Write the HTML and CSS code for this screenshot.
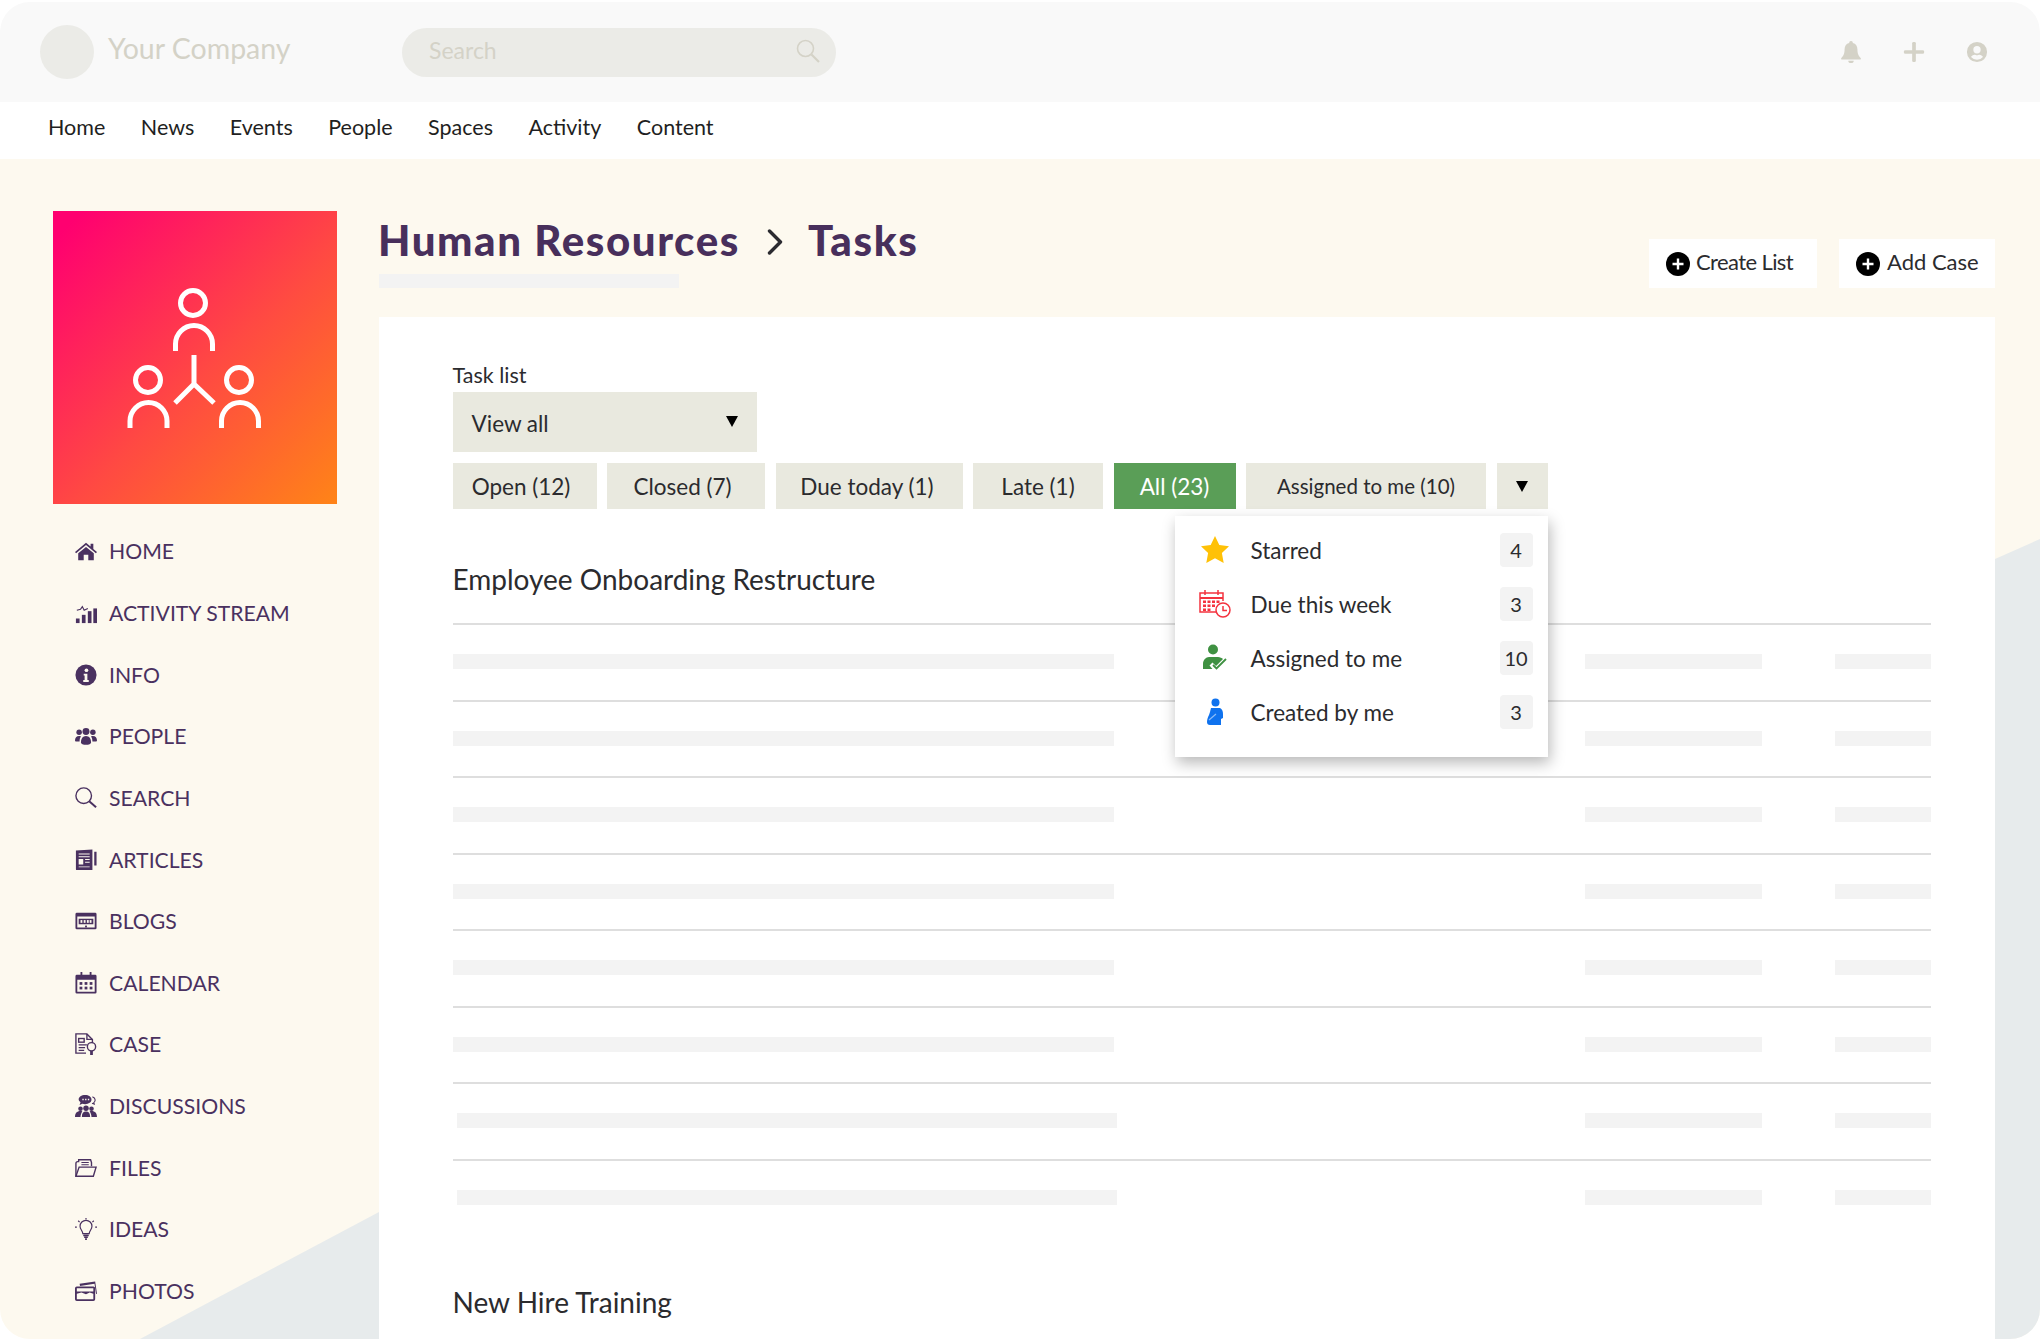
FILE: index.html
```html
<!DOCTYPE html>
<html lang="en">
  <head>
    <meta charset="UTF-8" />
    <meta name="viewport" content="width=device-width, initial-scale=1.0" />
    <title>Human Resources - Tasks</title>
    <link rel="stylesheet" href="styles.css">
  </head>
  <body>
    <div class="page">
      <div class="wedge wedge-left"></div>
      <div class="wedge wedge-right"></div>

      <header class="topbar">
        <div class="brand">
          <span class="brand-logo"></span>
          <span class="brand-name">Your Company</span>
        </div>
        <div class="searchbox">
          <span class="searchbox-text">Search</span>
          <svg class="searchbox-icon" viewBox="0 0 24 24" fill="none" stroke="currentColor" stroke-width="1.6"><circle cx="9.5" cy="9.5" r="8"/><path d="M15.5 15.5 23 23" stroke-width="2.2"/></svg>
        </div>
        <div class="topbar-icons">
          <svg viewBox="0 0 24 24" fill="currentColor"><path d="M12 0a2 2 0 0 0-2 2.200C6.600 3 5 5.800 5 9c0 5.500-1.700 7.500-3.500 9.500-.6.700-.2 1.800.8 1.800h19.400c1 0 1.400-1.100.8-1.800C20.700 16.500 19 14.500 19 9c0-3.200-1.600-6-5-6.800A2 2 0 0 0 12 0zM9 21.500a3 2.500 0 0 0 6 0z"/></svg>
          <svg viewBox="0 0 24 24" fill="currentColor"><rect x="10" y="1" width="4" height="22" rx="1.5"/><rect x="1" y="10" width="22" height="4" rx="1.5"/></svg>
          <svg viewBox="0 0 24 24" fill="currentColor"><path fill-rule="evenodd" d="M12 1a11 11 0 1 0 0 22 11 11 0 0 0 0-22zm0 4.500a4 4 0 1 1 0 8 4 4 0 0 1 0-8zm0 15a8.500 8.500 0 0 1-6.500-3c.8-1.500 2.200-2.500 3.800-2.500.8 0 1.500.5 2.700.5s1.900-.5 2.700-.5c1.600 0 3 1 3.800 2.500a8.500 8.500 0 0 1-6.500 3z"/></svg>
        </div>
      </header>

      <nav class="mainnav">
        <a>Home</a>
        <a>News</a>
        <a>Events</a>
        <a>People</a>
        <a>Spaces</a>
        <a>Activity</a>
        <a>Content</a>
      </nav>

      <div class="layout">
        <aside class="sidebar">
          <div class="space-tile">
            <svg viewBox="0 0 284 293" fill="none" stroke="#fff" stroke-width="5">
              <circle cx="140" cy="92" r="12.5"/>
              <path d="M122.500 140v-7a18.500 18.500 0 0 1 37 0v7"/>
              <path d="M141 144v29M141 173l-19 19M141 173l20 19"/>
              <circle cx="95" cy="169" r="12.5"/>
              <path d="M77 217v-7a18.500 18.500 0 0 1 37 0v7"/>
              <circle cx="186" cy="169" r="12.5"/>
              <path d="M168.500 217v-7a18.500 18.500 0 0 1 37 0v7"/>
            </svg>
          </div>
          <ul class="sidenav">
            <li>
              <svg viewBox="0 0 24 24" fill="currentColor"><path d="M12 3 0 13l1.200 1.400L12 5.500l10.800 8.900L24 13l-4-3.300V4h-3v3.200z"/><path d="M12 7.500 3.500 14.500V22h6v-6h5v6h6v-7.500z"/></svg>
              HOME
            </li>
            <li>
              <svg viewBox="0 0 24 24" fill="currentColor"><rect x="1" y="18" width="4" height="5"/><rect x="7.500" y="14" width="4" height="9"/><rect x="14" y="10" width="4" height="13"/><rect x="20" y="7" width="4" height="16"/><path d="M2 9l4-1 2-3 2 4 4-2" fill="none" stroke="currentColor" stroke-width="1.3"/></svg>
              ACTIVITY STREAM
            </li>
            <li>
              <svg viewBox="0 0 24 24"><circle cx="12" cy="12" r="11.5" fill="currentColor"/><circle cx="12.500" cy="6.800" r="2" fill="#fdf9ef"/><path d="M9.500 10.500h4v7h1.500v2H9v-2h1.500v-5h-1z" fill="#fdf9ef"/></svg>
              INFO
            </li>
            <li>
              <svg viewBox="0 0 24 24" fill="currentColor"><circle cx="4.500" cy="8" r="3"/><circle cx="19.500" cy="8" r="3"/><circle cx="12" cy="7" r="3.8"/><path d="M0 17c0-3 1.500-5 4.500-5 .8 0 1.500.2 2 .5-1 1.200-1.500 3-1.500 5.500H1c-.6 0-1-.4-1-1zM24 17c0-3-1.500-5-4.500-5-.8 0-1.500.2-2 .5 1 1.200 1.500 3 1.500 5.500h4c.6 0 1-.4 1-1z"/><path d="M6.500 19c0-4 2-7 5.500-7s5.500 3 5.500 7c0 1.500-2.500 2.500-5.500 2.500S6.500 20.500 6.500 19z"/></svg>
              PEOPLE
            </li>
            <li>
              <svg viewBox="0 0 24 24" fill="none" stroke="currentColor" stroke-width="1.5"><circle cx="9.500" cy="9.500" r="8.500"/><path d="M15.500 15.500 23 22" stroke-width="2.2"/></svg>
              SEARCH
            </li>
            <li>
              <svg viewBox="0 0 24 24" fill="currentColor"><path fill-rule="evenodd" d="M1 1.500 19 .5V23H2a1 1 0 0 1-1-1zM4 5v1h12V5zm0 3v1h12V8zm0 3v6h5v-6zm7 0v1h5v-1zm0 3v1h5v-1zM4 19v1h12v-1z"/><rect x="21" y="3" width="2.500" height="15"/></svg>
              ARTICLES
            </li>
            <li>
              <svg viewBox="0 0 24 24" fill="currentColor"><path fill-rule="evenodd" d="M2 3h20a1.500 1.500 0 0 1 1.500 1.500v15A1.500 1.500 0 0 1 22 21H2A1.500 1.500 0 0 1 .500 19.500v-15A1.500 1.500 0 0 1 2 3zm.500 4v12h19V7zM4 9.500h16v6H4z"/><rect x="6" y="11" width="2" height="3" fill="#fdf9ef"/><rect x="9.500" y="11" width="2" height="3" fill="#fdf9ef"/><rect x="13" y="11" width="2" height="3" fill="#fdf9ef"/><rect x="16" y="11" width="2" height="3" fill="#fdf9ef"/><rect x="11" y="17" width="2" height="2"/></svg>
              BLOGS
            </li>
            <li>
              <svg viewBox="0 0 24 24" fill="currentColor"><path fill-rule="evenodd" d="M6 0h2v3h8V0h2v3h4a1.500 1.500 0 0 1 1.500 1.500V22a1.500 1.500 0 0 1-1.500 1.500H2A1.500 1.500 0 0 1 .500 22V4.500A1.500 1.500 0 0 1 2 3h4zM2.500 8.500v13h19v-13z"/><rect x="5" y="11" width="3" height="3"/><rect x="10.500" y="11" width="3" height="3"/><rect x="16" y="11" width="3" height="3"/><rect x="5" y="16" width="3" height="3"/><rect x="10.500" y="16" width="3" height="3"/><rect x="16" y="16" width="3" height="3"/></svg>
              CALENDAR
            </li>
            <li>
              <svg viewBox="0 0 24 24" fill="none" stroke="currentColor" stroke-width="1.5"><path d="M12 22H1V1h12l6 6v4"/><path d="M13 1v6h6"/><rect x="4" y="6" width="6" height="4"/><path d="M4 13h9M4 16h7M4 19h6"/><circle cx="18" cy="15" r="4.5"/><path d="M18 19.500V24" stroke-width="3"/></svg>
              CASE
            </li>
            <li>
              <svg viewBox="0 0 24 24" fill="currentColor"><path fill-rule="evenodd" d="M11 0c4 0 7 2 7 5s-3 5-7 5c-1 0-2-.1-3-.5L5 11l1-3C5 7 4 6 4 5c0-3 3-5 7-5zM8 4.200v1.500h1.500V4.200zm3 0v1.500h1.500V4.200zm3 0v1.500h1.500V4.200z"/><path d="M19 2c2 .8 3 2 3 3.500 0 1-.5 2-1.500 2.800L21 10l-2.500-1" fill="none" stroke="currentColor" stroke-width="1.2"/><circle cx="6" cy="15" r="2.5"/><circle cx="18" cy="15" r="2.5"/><circle cx="12" cy="14.500" r="3"/><path d="M0 24c0-4 2-6.500 6-6.500 1 0 1.500.2 2 .4-1 1.500-2 3.500-2 6.100zM24 24c0-4-2-6.500-6-6.500-1 0-1.500.2-2 .4 1 1.500 2 3.500 2 6.100zM7.500 24c0-4 1.500-6 4.500-6s4.500 2 4.500 6z"/></svg>
              DISCUSSIONS
            </li>
            <li>
              <svg viewBox="0 0 24 24" fill="none" stroke="currentColor" stroke-width="1.5"><path d="M1 21V7a2 2 0 0 1 2-2h1V3h13l1 3v4"/><path d="M7 6h8M7 8.500h8" stroke-width="1.2"/><path d="M1 21l3.500-10H23l-3 10z"/></svg>
              FILES
            </li>
            <li>
              <svg viewBox="0 0 24 24" fill="none" stroke="currentColor" stroke-width="1.3"><path d="M8.500 17c0-3-3-4.500-3-8a6.500 6.500 0 0 1 13 0c0 3.500-3 5-3 8z"/><path d="M9 19h6M10 21h4M11 23h2" stroke-width="1.8"/><path d="M12 0v1.500M3.500 3 5 4.500M20.500 3 19 4.500M0 10h2M22 10h2"/></svg>
              IDEAS
            </li>
            <li>
              <svg viewBox="0 0 24 24" fill="currentColor"><path fill-rule="evenodd" d="M2 7h18a2 2 0 0 1 2 2v12a2 2 0 0 1-2 2H2a2 2 0 0 1-2-2V9a2 2 0 0 1 2-2zm0 2v3.500h18V9zm0 6v6h18v-6l-4-1.500-4 2-5-2z"/><path d="M5 4 22 1.500l2 13.500-1 .2-1.700-11L5.500 6.500z"/></svg>
              PHOTOS
            </li>
          </ul>
        </aside>

        <main class="content">
          <div class="content-head">
            <div class="title-block">
              <h1>
                Human Resources
                <svg class="crumb" viewBox="0 0 16 26" fill="none" stroke="#2b2b30" stroke-width="3.4" stroke-linecap="round" stroke-linejoin="round"><path d="M2.500 2 13.500 13 2.500 24"/></svg>
                Tasks
              </h1>
              <div class="skeleton title-skeleton"></div>
            </div>
            <div class="head-actions">
              <button class="action-btn action-create">
                <svg viewBox="0 0 24 24"><circle cx="12" cy="12" r="12" fill="#000"/><path d="M12 6.500v11M6.500 12h11" stroke="#fff" stroke-width="2.4"/></svg>
                <span>Create List</span>
              </button>
              <button class="action-btn action-add">
                <svg viewBox="0 0 24 24"><circle cx="12" cy="12" r="12" fill="#000"/><path d="M12 6.500v11M6.500 12h11" stroke="#fff" stroke-width="2.4"/></svg>
                <span>Add Case</span>
              </button>
            </div>
          </div>

          <div class="card">
            <label class="field-label">Task list</label>
            <div class="select-box">
              View all
              <span class="caret"></span>
            </div>

            <div class="tabs">
              <button class="tab tab-open">Open (12)</button>
              <button class="tab tab-closed">Closed (7)</button>
              <button class="tab tab-due">Due today (1)</button>
              <button class="tab tab-late">Late (1)</button>
              <button class="tab tab-all active">All (23)</button>
              <button class="tab tab-assigned">Assigned to me (10)</button>
              <button class="tab tab-more"><span class="caret"></span></button>

              <div class="tab-menu">
                <div class="menu-row">
                  <svg viewBox="0 0 32 28"><path d="M16 0l4.300 9 9.700 1.300-7.100 6.800 1.800 9.900-8.700-4.800L7.300 27l1.800-9.900L2 10.300 11.700 9z" fill="#ffc107"/></svg>
                  <span class="menu-label">Starred</span>
                  <span class="menu-count">4</span>
                </div>
                <div class="menu-row">
                  <svg viewBox="0 0 32 28" fill="none" stroke="#f4333f" stroke-width="1.5"><path d="M17 22H1V3h23v8"/><path d="M1 8h23" stroke-width="2"/><path d="M6 0v5M19 0v5"/><path d="M4 10.500h3v2.500H4zM8.500 10.500h3v2.500h-3zM13 10.500h3v2.500h-3zM17.500 10.500h3v2.500h-3zM4 14.500h3V17H4zM8.500 14.500h3V17h-3zM13 14.500h3V17h-3zM4 18.500h3V21H4zM8.500 18.500h3V21h-3z" fill="#f4333f" stroke="none"/><circle cx="24" cy="20" r="7" fill="#fff"/><path d="M24 16v4.500h4"/></svg>
                  <span class="menu-label">Due this week</span>
                  <span class="menu-count">3</span>
                </div>
                <div class="menu-row">
                  <svg viewBox="0 0 32 28"><circle cx="14" cy="5.500" r="5" fill="#3f9142"/><path d="M4 25v-5c0-4 3-7 6-7h9c2 0 4 1 5 2l-7 7-3.500-3.500-3 3 3 3.500z" fill="#3f9142"/><path d="M14 21l3.500 3.500L27 15" fill="none" stroke="#3f9142" stroke-width="1.800"/></svg>
                  <span class="menu-label">Assigned to me</span>
                  <span class="menu-count">10</span>
                </div>
                <div class="menu-row">
                  <svg viewBox="0 0 32 28" fill="#0f72ee"><circle cx="16.500" cy="4.500" r="4"/><path d="M12 10h9c2 1 3 3 3 6v4l-2 1v6H11c-2 0-3-1-3-3 0-3 1-5 2-7l1-3z"/><path d="M10 22l7-6" stroke="#8cbcf7" stroke-width="1.2"/></svg>
                  <span class="menu-label">Created by me</span>
                  <span class="menu-count">3</span>
                </div>
              </div>
            </div>

            <h2 class="list-title">Employee Onboarding Restructure</h2>
            <div class="task-rows">
              <div class="task-row"><div class="skeleton bar-name"></div><div class="skeleton bar-owner"></div><div class="skeleton bar-date"></div></div>
              <div class="task-row"><div class="skeleton bar-name"></div><div class="skeleton bar-owner"></div><div class="skeleton bar-date"></div></div>
              <div class="task-row"><div class="skeleton bar-name"></div><div class="skeleton bar-owner"></div><div class="skeleton bar-date"></div></div>
              <div class="task-row"><div class="skeleton bar-name"></div><div class="skeleton bar-owner"></div><div class="skeleton bar-date"></div></div>
              <div class="task-row"><div class="skeleton bar-name"></div><div class="skeleton bar-owner"></div><div class="skeleton bar-date"></div></div>
              <div class="task-row"><div class="skeleton bar-name"></div><div class="skeleton bar-owner"></div><div class="skeleton bar-date"></div></div>
              <div class="task-row shifted"><div class="skeleton bar-name"></div><div class="skeleton bar-owner"></div><div class="skeleton bar-date"></div></div>
              <div class="task-row shifted"><div class="skeleton bar-name"></div><div class="skeleton bar-owner"></div><div class="skeleton bar-date"></div></div>
            </div>

            <h2 class="list-title list-title-next">New Hire Training</h2>
          </div>
        </main>
      </div>
    </div>
  </body>
</html>
```

FILE: styles.css
```css
* {
  box-sizing: border-box;
}

body {
  margin: 0;
  background: #fff;
  font-family: "Lato", "Open Sans", sans-serif;
  color: #2b2b2e;
}

.page {
  position: relative;
  width: 2040px;
  height: 1339px;
  padding-top: 2px;
  overflow: hidden;
  background: #fff;
  border-radius: 30px;
}

/* grey corners behind the content */
.wedge {
  position: absolute;
  bottom: 0;
  z-index: 1;
  background: #e7ebec;
}

.wedge-left {
  left: 0;
  width: 379px;
  height: 127px;
  clip-path: polygon(140px 127px, 379px 0, 379px 127px);
}

.wedge-right {
  right: 0;
  width: 45px;
  height: 800px;
  clip-path: polygon(0 20px, 45px 0, 45px 800px, 0 800px);
}

.topbar {
  display: flex;
  align-items: center;
  height: 100px;
  padding: 0 52px 0 40px;
  background: #f9f9f9;
  border-radius: 30px 30px 0 0;
  color: #d4d2c7;
}

.brand {
  display: flex;
  align-items: center;
  gap: 14px;
  width: 362px;
}

.brand-logo {
  width: 54px;
  height: 54px;
  border-radius: 50%;
  background: #ebebe7;
}

.brand-name {
  margin-top: -8px;
  font-size: 28.5px;
}

.searchbox {
  display: flex;
  align-items: center;
  justify-content: space-between;
  width: 434px;
  height: 49px;
  padding: 0 16px 0 27px;
  border-radius: 25px;
  background: #ebebe7;
  font-size: 23px;
}

.searchbox-text {
  margin-top: -4px;
}

.searchbox-icon {
  width: 24px;
  height: 24px;
  margin-top: -2px;
}

.topbar-icons {
  display: flex;
  align-items: center;
  gap: 41px;
  margin-left: auto;
}

.topbar-icons svg {
  width: 22px;
  height: 22px;
}

.mainnav {
  display: flex;
  align-items: center;
  height: 57px;
  padding: 0 0 7px 48px;
  background: #fff;
  font-size: 21.5px;
  color: #1f1f22;
}

.mainnav a {
  margin-right: 35.5px;
}

.layout {
  display: flex;
  height: 1180px;
  background: #fdf9ef;
}

.sidebar {
  position: relative;
  z-index: 2;
  width: 379px;
  padding: 52px 0 0 53px;
}

.space-tile {
  width: 284px;
  height: 293px;
  background: linear-gradient(135deg, #ff0070 5%, #ff4a42 55%, #ff8417 100%);
}

.space-tile svg {
  display: block;
  width: 100%;
  height: 100%;
}

.sidenav {
  margin: 16.5px 0 0;
  padding: 0 0 0 22px;
  list-style: none;
  font-size: 21.2px;
  color: #4a3160;
}

.sidenav li {
  display: flex;
  align-items: center;
  gap: 12px;
  height: 61.65px;
}

.sidenav svg {
  flex-shrink: 0;
  width: 22px;
  height: 22px;
}

.content {
  position: relative;
  z-index: 2;
  width: 1616px;
}

.content-head {
  display: flex;
  align-items: flex-end;
  justify-content: space-between;
  height: 158px;
  padding-bottom: 29px;
}

h1 {
  display: flex;
  align-items: center;
  margin: 0 0 11px -1px;
  font-size: 42px;
  font-weight: 900;
  letter-spacing: 1.6px;
  line-height: 46px;
  color: #482f5c;
}

.crumb {
  width: 16px;
  height: 26px;
  margin: 3px 25px 0 27px;
}

.skeleton {
  height: 15px;
  background: #f3f3f3;
}

.title-skeleton {
  width: 300px;
  height: 14px;
}

.head-actions {
  display: flex;
  gap: 22px;
}

.action-btn {
  display: flex;
  align-items: center;
  gap: 6px;
  height: 49px;
  padding: 0 0 0 17px;
  border: 0;
  background: #fff;
  font: inherit;
  font-size: 22px;
  color: #2b2b2e;
}

.action-btn span {
  margin-top: -4px;
}

.action-btn svg {
  width: 24px;
  height: 24px;
}

.action-create {
  width: 168px;
  letter-spacing: -0.6px;
}

.action-add {
  width: 156px;
  gap: 7px;
  padding-left: 17px;
}

.card {
  height: 1022px;
  padding: 44px 64px 0 73.5px;
  background: #fff;
}

.field-label {
  display: block;
  height: 31px;
  font-size: 21.5px;
  line-height: 28px;
}

.select-box {
  display: flex;
  align-items: center;
  justify-content: space-between;
  width: 304px;
  height: 60px;
  padding: 3px 19px 0;
  background: #e9e9df;
  font-size: 22.5px;
}

.select-box .caret {
  margin-top: -5px;
}

.caret {
  display: inline-block;
  width: 0;
  height: 0;
  border-left: 6.5px solid transparent;
  border-right: 6.5px solid transparent;
  border-top: 11px solid #000;
}

.tabs {
  position: relative;
  display: inline-flex;
  gap: 10.5px;
  margin-top: 11px;
  vertical-align: top;
}

.tab {
  height: 46px;
  padding: 0;
  border: 0;
  background: #e9e9df;
  font: inherit;
  font-size: 22.5px;
  color: #2b2b2e;
}

.tab.active {
  background: #5a9e57;
  color: #fff;
}

.tab-open { width: 144px; padding-right: 7px; }
.tab-closed { width: 158px; padding-right: 7px; }
.tab-due { width: 187px; padding-right: 4px; }
.tab-late { width: 130px; }
.tab-all { width: 122px; }
.tab-assigned { width: 240px; font-size: 20.5px; }
.tab-more { width: 51px; padding-bottom: 6px; }

.tab-menu {
  position: absolute;
  top: 53px;
  right: 0;
  z-index: 5;
  width: 373px;
  height: 241px;
  padding-top: 7px;
  background: #fff;
  box-shadow: 2px 6px 14px rgba(0, 0, 0, 0.28);
}

.menu-row {
  display: flex;
  align-items: center;
  height: 54px;
  padding: 0 15px 0 24px;
  font-size: 22.5px;
}

.menu-row svg {
  width: 32px;
  height: 28px;
}

.menu-label {
  margin-left: 20px;
}

.menu-count {
  width: 33px;
  height: 34px;
  margin-left: auto;
  border-radius: 4px;
  background: #f3f3f3;
  font-size: 20px;
  line-height: 34px;
  text-align: center;
}

.list-title {
  margin: 50px 0 24px;
  font-size: 28px;
  font-weight: 400;
  line-height: 40px;
}

.list-title-next {
  margin-top: 47px;
}

.task-row {
  display: flex;
  height: 76.5px;
  padding-top: 29px;
  border-top: 2px solid #dedede;
}

.bar-name {
  width: 661px;
}

.bar-owner {
  width: 177px;
  margin-left: 471.5px;
}

.bar-date {
  width: 96.5px;
  margin-left: 72.5px;
}

.shifted .bar-name {
  margin-left: 4px;
}

.shifted .bar-owner {
  margin-left: 468.5px;
}
```
